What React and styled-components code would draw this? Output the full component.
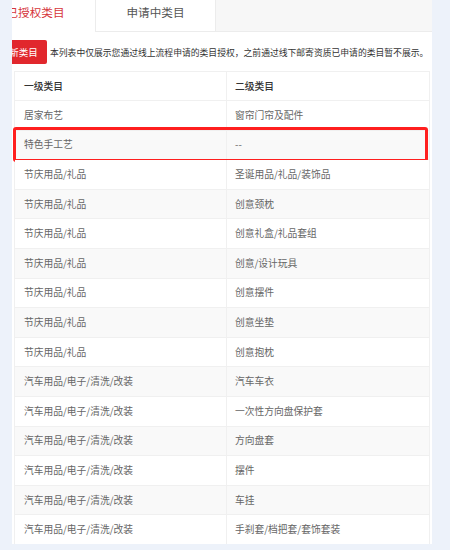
import React from "react";
import styled, { createGlobalStyle } from "styled-components";

const Global = createGlobalStyle`
  html, body { margin: 0; padding: 0; background: #edf2fa; }
  body { font-family: "Noto Sans CJK SC", "Noto Sans", sans-serif; }
`;

const Page = styled.div`
  width: 450px;
  height: 550px;
  box-sizing: border-box;
  padding: 0 18px 0 12px;
  overflow: hidden;
`;

const Panel = styled.div`
  width: 420px;
  height: 544px;
  background: #fff;
  overflow: hidden;
`;

const TabBar = styled.div`
  display: flex;
  height: 31px;
  margin-left: -36px;
  background: #f7f7f7;
  border-bottom: 1px solid #ececec;
  box-sizing: content-box;
`;

const Tab = styled.div`
  width: 120px;
  height: ${(p) => (p.$active ? "32px" : "31px")};
  display: flex;
  align-items: center;
  justify-content: center;
  font-size: 11.6px;
  color: ${(p) => (p.$active ? "#d6363b" : "#555")};
  background: #fff;
  border-right: 1px solid #ececec;
  box-sizing: border-box;
  padding-bottom: ${(p) => (p.$active ? "8px" : "7px")};
`;

const Notice = styled.div`
  display: flex;
  align-items: center;
  gap: 3px;
  height: 24px;
  margin-top: 8px;
`;

const AddButton = styled.div`
  flex: none;
  width: 66px;
  height: 24px;
  margin-left: -31px;
  border-radius: 2px;
  background: #e1272d;
  color: #fff;
  font-size: 9.5px;
  display: flex;
  align-items: center;
  justify-content: center;
`;

const NoticeText = styled.div`
  font-size: 8.8px;
  color: #333;
  white-space: nowrap;
`;

const Table = styled.div`
  margin: 7px 2px 0;
  border: 1px solid #f0f0f0;
  border-bottom: none;
`;

const Row = styled.div`
  position: relative;
  display: grid;
  grid-template-columns: 211px 1fr;
  height: ${(p) => (p.$header ? "29px" : "29.6px")};
  box-sizing: border-box;
  border-bottom: 1px solid #f0f0f0;
  background: ${(p) => (p.$striped ? "#f9f9f9" : "#fff")};
`;

const Cell = styled.div`
  display: flex;
  align-items: center;
  padding-left: ${(p) => (p.$second ? "8px" : "9px")};
  padding-bottom: 1px;
  font-size: 9.75px;
  color: ${(p) => (p.$header ? "#333" : "#666")};
  font-weight: ${(p) => (p.$header ? 500 : 400)};
  border-left: ${(p) => (p.$second ? "1px solid #f0f0f0" : "none")};
  white-space: nowrap;
`;

const Highlight = styled.div`
  position: absolute;
  top: -3.5px;
  bottom: -3px;
  left: -2px;
  right: 1px;
  border: 3.5px solid #ff1f1f;
  border-radius: 3px;
  pointer-events: none;
`;

const rows = [
  ["居家布艺", "窗帘门帘及配件"],
  ["特色手工艺", "--", true],
  ["节庆用品/礼品", "圣诞用品/礼品/装饰品"],
  ["节庆用品/礼品", "创意颈枕"],
  ["节庆用品/礼品", "创意礼盒/礼品套组"],
  ["节庆用品/礼品", "创意/设计玩具"],
  ["节庆用品/礼品", "创意摆件"],
  ["节庆用品/礼品", "创意坐垫"],
  ["节庆用品/礼品", "创意抱枕"],
  ["汽车用品/电子/清洗/改装", "汽车车衣"],
  ["汽车用品/电子/清洗/改装", "一次性方向盘保护套"],
  ["汽车用品/电子/清洗/改装", "方向盘套"],
  ["汽车用品/电子/清洗/改装", "摆件"],
  ["汽车用品/电子/清洗/改装", "车挂"],
  ["汽车用品/电子/清洗/改装", "手刹套/档把套/套饰套装"],
];

export default function App() {
  return (
    <>
      <Global />
      <Page>
        <Panel>
          <TabBar>
            <Tab $active>已授权类目</Tab>
            <Tab>申请中类目</Tab>
          </TabBar>
          <Notice>
            <AddButton>申请新类目</AddButton>
            <NoticeText>
              本列表中仅展示您通过线上流程申请的类目授权，之前通过线下邮寄资质已申请的类目暂不展示。
            </NoticeText>
          </Notice>
          <Table>
            <Row $header>
              <Cell $header>一级类目</Cell>
              <Cell $header $second>二级类目</Cell>
            </Row>
            {rows.map(([a, b, hl], i) => (
              <Row key={i} $striped={i % 2 === 1}>
                <Cell>{a}</Cell>
                <Cell $second>{b}</Cell>
                {hl && <Highlight />}
              </Row>
            ))}
          </Table>
        </Panel>
      </Page>
    </>
  );
}
